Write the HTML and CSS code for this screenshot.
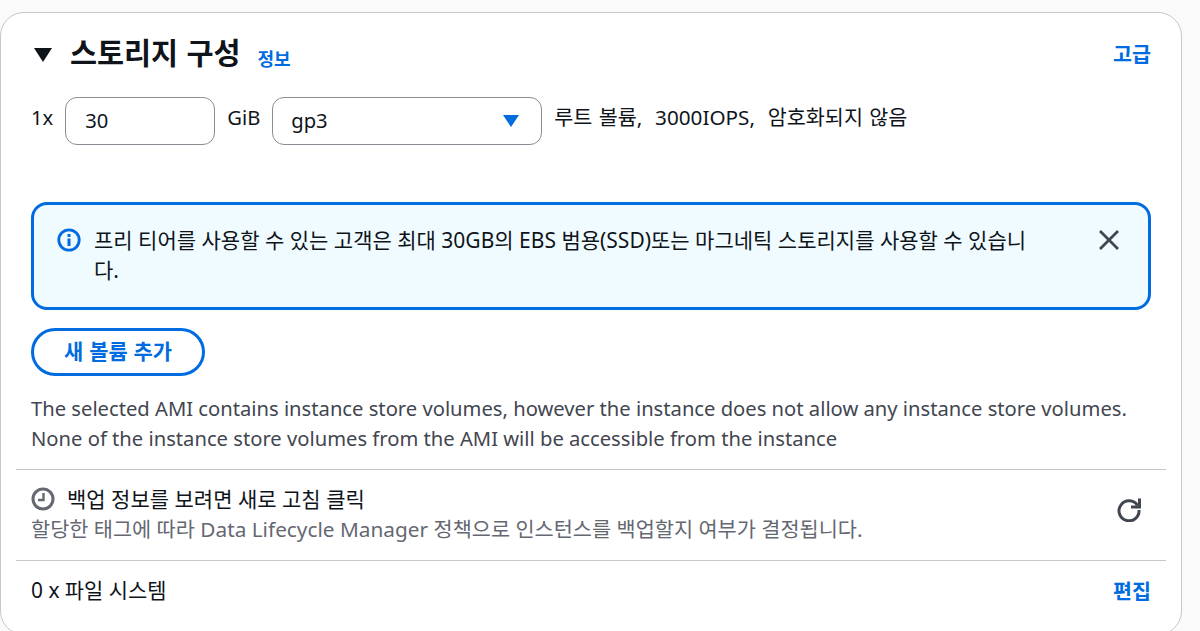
FILE: index.html
```html
<!DOCTYPE html>
<html lang="ko">
<head>
<meta charset="utf-8">
<title>스토리지 구성</title>
<link rel="stylesheet" href="styles.css">
</head>
<body>
<section class="card">
  <header class="head">
    <div class="head-left">
      <svg class="caret" width="20" height="16" viewBox="0 0 20 16"><path d="M1 1h18L10 15z" fill="#0f141a"/></svg>
      <h2 class="title">스토리지 구성</h2>
      <a class="link info">정보</a>
    </div>
    <a class="link strong">고급</a>
  </header>
  <div class="volume-row">
    <span class="lbl">1x</span>
    <div class="field size">30</div>
    <span class="lbl">GiB</span>
    <div class="field type">gp3
      <svg class="sel-caret" width="18" height="14" viewBox="0 0 18 14"><path d="M1 1h16L9 13z" fill="#006ce0"/></svg>
    </div>
    <span class="lbl note">루트 볼륨,&nbsp; 3000IOPS,&nbsp; 암호화되지 않음</span>
  </div>
  <div class="alert">
    <svg class="info-icon" width="24" height="24" viewBox="0 0 24 24"><circle cx="12" cy="12" r="10.2" fill="none" stroke="#006ce0" stroke-width="2.8"/><rect x="10.5" y="10.5" width="3" height="7.5" fill="#006ce0"/><rect x="10.5" y="6" width="3" height="3" fill="#006ce0"/></svg>
    <p class="alert-text">프리 티어를 사용할 수 있는 고객은 최대 30GB의 EBS 범용(SSD)또는 마그네틱 스토리지를 사용할 수 있습니다.</p>
    <svg class="close" width="22" height="22" viewBox="0 0 22 22"><path d="M2 2l18 18M20 2L2 20" stroke="#424650" stroke-width="2.8" fill="none"/></svg>
  </div>
  <button class="btn">새 볼륨 추가</button>
  <p class="warn">The selected AMI contains instance store volumes, however the instance does not allow any instance store volumes. None of the instance store volumes from the AMI will be accessible from the instance</p>
  <div class="backup">
    <div class="backup-main">
      <div class="backup-title">
        <svg width="24" height="24" viewBox="0 0 24 24"><circle cx="12" cy="12" r="10" fill="none" stroke="#656871" stroke-width="3"/><path d="M12.5 6v7H7" fill="none" stroke="#656871" stroke-width="2.4"/></svg>
        <span>백업 정보를 보려면 새로 고침 클릭</span>
      </div>
      <div class="backup-sub">할당한 태그에 따라 Data Lifecycle Manager 정책으로 인스턴스를 백업할지 여부가 결정됩니다.</div>
    </div>
    <svg class="refresh" width="26" height="26" viewBox="0 0 26 26"><path d="M21.5 9.5A10 10 0 1 0 23 14" fill="none" stroke="#424650" stroke-width="3"/><path d="M23.5 2.5v8.5H15" fill="none" stroke="#424650" stroke-width="3"/></svg>
  </div>
  <div class="fs">
    <span>0 x 파일 시스템</span>
    <a class="link strong">편집</a>
  </div>
</section>
</body>
</html>
```
FILE: styles.css
```css
* { box-sizing: border-box; }
html, body { margin: 0; height: 631px; overflow: hidden; }
body {
  background: #fafafa;
  padding-top: 12px;
  font-family: "Noto Sans", "Noto Sans CJK KR", sans-serif;
  font-size: 20.2px;
  color: #0f141a;
}
.card {
  width: 1182px;
  height: 623px;
  background: #fff;
  border: 1px solid #c6c6cd;
  border-radius: 24px;
  padding: 0 30px;
}
.link { color: #006ce0; font-family: "Noto Sans CJK KR", sans-serif; font-weight: 700; }
.head { display: flex; justify-content: space-between; align-items: center; height: 60px; padding-top: 20px; }
.head-left { display: flex; align-items: center; }
.caret { margin-left: 2px; margin-right: 17px; margin-top: 4px; }
.title { margin: 0 0 4px; font: 700 29.4px/40px "Noto Sans CJK KR", sans-serif; }
.info { font-size: 18px; margin-left: 17px; margin-top: 9px; }
.strong { font-size: 20.6px; }
.volume-row { display: flex; align-items: flex-start; margin-top: 24px; height: 48px; }
.lbl { line-height: 40px; }
.field {
  height: 48px;
  background: #fff;
  border: 1px solid #8c8c94;
  border-radius: 12px;
  padding: 0 19px 2px;
  line-height: 46px;
  display: flex;
  align-items: center;
  justify-content: space-between;
}
.size { width: 150px; margin: 0 12px; }
.type { width: 270px; margin-left: 12px; margin-right: 12px; padding-left: 18px; }
.note { font-size: 20.7px; word-spacing: 1px; }
.sel-caret { margin: 2px 2px 0 0; }
.alert {
  display: flex;
  align-items: flex-start;
  margin-top: 57px;
  width: 1120px;
  height: 108px;
  background: #f0fbff;
  border: 3px solid #006ce0;
  border-radius: 16px;
  padding: 22px 28px 0 23px;
}
.info-icon { flex: none; margin-top: 1px; margin-right: 13px; }
.alert-text { margin: 0; width: 936px; font-size: 21px; line-height: 30px; flex: none; margin-top: -2px; }
.close { margin-left: auto; margin-top: 2px; }
.btn {
  display: block;
  margin-top: 18px;
  width: 174px;
  height: 48px;
  background: #fff;
  border: 3px solid #006ce0;
  border-radius: 24px;
  color: #006ce0;
  font: 700 20.9px "Noto Sans CJK KR", sans-serif;
  padding: 0 0 5px;
}
.warn { margin: 17px 0 0; line-height: 30px; color: #424650; width: 1120px; }
.backup {
  margin: 16px 0 0 -15px;
  width: 1150px;
  height: 91px;
  border-top: 1px solid #c6c6cd;
  padding: 14px 24px 0 15px;
  display: flex;
  justify-content: space-between;
}
.backup-title { display: flex; align-items: center; gap: 12px; line-height: 30px; font-size: 21px; }
.backup-sub { color: #656871; line-height: 30px; font-size: 20.8px; }
.refresh { margin-top: 12px; }
.fs {
  margin-left: -15px;
  width: 1150px;
  border-top: 1px solid #c6c6cd;
  padding: 14px 15px 0;
  display: flex;
  justify-content: space-between;
  line-height: 30px;
  font-size: 20.9px;
}
```
